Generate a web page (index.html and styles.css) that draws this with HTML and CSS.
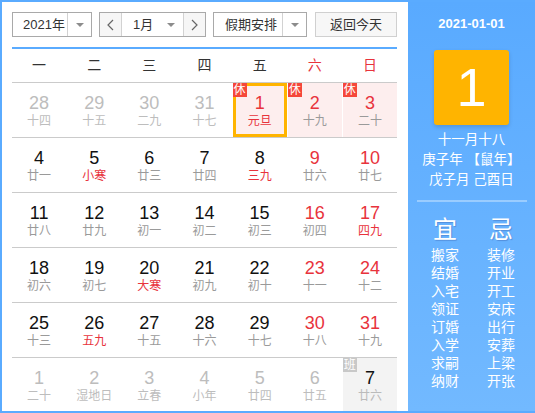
FILE: index.html
```html
<!DOCTYPE html>
<html lang="zh-CN">
<head>
<meta charset="utf-8">
<title>万年历</title>
<link rel="stylesheet" href="styles.css">
</head>
<body>
<div class="frame">
  <div class="main">
    <div class="toolbar">
      <div class="select year"><span class="sel-text">2021年</span><span class="sel-arrow"><i class="tri"></i></span></div>
      <div class="month-group">
        <span class="nav prev"><svg width="7" height="12" viewBox="0 0 7 12"><polyline points="6,1 1,6 6,11" fill="none" stroke="#666" stroke-width="1.2"/></svg></span>
        <span class="month-sel"><span class="sel-text">1月</span><i class="tri"></i></span>
        <span class="nav next"><svg width="7" height="12" viewBox="0 0 7 12"><polyline points="1,1 6,6 1,11" fill="none" stroke="#666" stroke-width="1.2"/></svg></span>
      </div>
      <div class="select holiday"><span class="sel-text">假期安排</span><span class="sel-arrow"><i class="tri"></i></span></div>
      <div class="today-btn">返回今天</div>
    </div>
    <div class="weekdays">
      <span>一</span><span>二</span><span>三</span><span>四</span><span>五</span><span class="red">六</span><span class="red">日</span>
    </div>
    <div class="weeks">
      <div class="week">
        <div class="day other"><span class="num">28</span><span class="lunar">十四</span></div>
        <div class="day other"><span class="num">29</span><span class="lunar">十五</span></div>
        <div class="day other"><span class="num">30</span><span class="lunar">二九</span></div>
        <div class="day other"><span class="num">31</span><span class="lunar">十七</span></div>
        <div class="day rest sel"><i class="badge">休</i><span class="num red">1</span><span class="lunar red">元旦</span></div>
        <div class="day rest"><i class="badge">休</i><span class="num red">2</span><span class="lunar">十九</span></div>
        <div class="day rest"><i class="badge">休</i><span class="num red">3</span><span class="lunar">二十</span></div>
      </div>
      <div class="week">
        <div class="day"><span class="num">4</span><span class="lunar">廿一</span></div>
        <div class="day"><span class="num">5</span><span class="lunar red">小寒</span></div>
        <div class="day"><span class="num">6</span><span class="lunar">廿三</span></div>
        <div class="day"><span class="num">7</span><span class="lunar">廿四</span></div>
        <div class="day"><span class="num">8</span><span class="lunar red">三九</span></div>
        <div class="day"><span class="num red">9</span><span class="lunar">廿六</span></div>
        <div class="day"><span class="num red">10</span><span class="lunar">廿七</span></div>
      </div>
      <div class="week">
        <div class="day"><span class="num">11</span><span class="lunar">廿八</span></div>
        <div class="day"><span class="num">12</span><span class="lunar">廿九</span></div>
        <div class="day"><span class="num">13</span><span class="lunar">初一</span></div>
        <div class="day"><span class="num">14</span><span class="lunar">初二</span></div>
        <div class="day"><span class="num">15</span><span class="lunar">初三</span></div>
        <div class="day"><span class="num red">16</span><span class="lunar">初四</span></div>
        <div class="day"><span class="num red">17</span><span class="lunar red">四九</span></div>
      </div>
      <div class="week">
        <div class="day"><span class="num">18</span><span class="lunar">初六</span></div>
        <div class="day"><span class="num">19</span><span class="lunar">初七</span></div>
        <div class="day"><span class="num">20</span><span class="lunar red">大寒</span></div>
        <div class="day"><span class="num">21</span><span class="lunar">初九</span></div>
        <div class="day"><span class="num">22</span><span class="lunar">初十</span></div>
        <div class="day"><span class="num red">23</span><span class="lunar">十一</span></div>
        <div class="day"><span class="num red">24</span><span class="lunar">十二</span></div>
      </div>
      <div class="week">
        <div class="day"><span class="num">25</span><span class="lunar">十三</span></div>
        <div class="day"><span class="num">26</span><span class="lunar red">五九</span></div>
        <div class="day"><span class="num">27</span><span class="lunar">十五</span></div>
        <div class="day"><span class="num">28</span><span class="lunar">十六</span></div>
        <div class="day"><span class="num">29</span><span class="lunar">十七</span></div>
        <div class="day"><span class="num red">30</span><span class="lunar">十八</span></div>
        <div class="day"><span class="num red">31</span><span class="lunar">十九</span></div>
      </div>
      <div class="week">
        <div class="day other"><span class="num">1</span><span class="lunar">二十</span></div>
        <div class="day other"><span class="num">2</span><span class="lunar">湿地日</span></div>
        <div class="day other"><span class="num">3</span><span class="lunar">立春</span></div>
        <div class="day other"><span class="num">4</span><span class="lunar">小年</span></div>
        <div class="day other"><span class="num">5</span><span class="lunar">廿四</span></div>
        <div class="day other"><span class="num">6</span><span class="lunar">廿五</span></div>
        <div class="day workday"><i class="badge work">班</i><span class="num">7</span><span class="lunar light">廿六</span></div>
      </div>
    </div>
  </div>
  <div class="side">
    <div class="side-date">2021-01-01</div>
    <div class="big-day">1</div>
    <div class="lunar-info">
      <div>十一月十八</div>
      <div>庚子年 【鼠年】</div>
      <div>戊子月 己酉日</div>
    </div>
    <div class="divider"></div>
    <div class="yiji">
      <div class="col">
        <div class="col-head">宜</div>
        <span>搬家</span><span>结婚</span><span>入宅</span><span>领证</span><span>订婚</span><span>入学</span><span>求嗣</span><span>纳财</span>
      </div>
      <div class="col">
        <div class="col-head">忌</div>
        <span>装修</span><span>开业</span><span>开工</span><span>安床</span><span>出行</span><span>安葬</span><span>上梁</span><span>开张</span>
      </div>
    </div>
  </div>
</div>
</body>
</html>
```

FILE: styles.css
```css
* { box-sizing: border-box; margin: 0; padding: 0; }
html, body { width: 535px; height: 413px; overflow: hidden; }
body {
  font-family: "Liberation Sans", "Noto Sans CJK SC", sans-serif;
  background: #fff;
  color: #111;
}
.frame {
  display: flex;
  width: 535px;
  height: 413px;
  border: 2px solid #5aabff;
  border-right: 0;
}
.main {
  width: 406px;
  padding: 10px 11px 0 10px;
  background: #fff;
  overflow: hidden;
}

/* toolbar */
.toolbar {
  display: flex;
  height: 25px;
  font-size: 13px;
  color: #333;
}
.select {
  display: flex;
  height: 25px;
  border: 1px solid #a9a9a9;
  background: #fff;
}
.sel-text { line-height: 23px; white-space: nowrap; }
.select .sel-text { flex: 1; }
.year { width: 80px; margin-right: 7px; }
.year .sel-text { padding-left: 10px; }
.holiday { width: 94px; margin-right: 8px; }
.holiday .sel-text { padding-left: 11px; }
.sel-arrow {
  width: 24px;
  border-left: 1px solid #d2d2d2;
  display: flex;
  align-items: center;
  justify-content: center;
}
.tri {
  display: block;
  width: 0;
  height: 0;
  border-left: 4px solid transparent;
  border-right: 4px solid transparent;
  border-top: 4px solid #8c8c8c;
}
.month-group {
  display: flex;
  width: 107px;
  height: 25px;
  margin-right: 7px;
  border: 1px solid #a9a9a9;
}
.nav {
  width: 22px;
  background: #f6f6f6;
  display: flex;
  align-items: center;
  justify-content: center;
}
.prev { border-right: 1px solid #d2d2d2; }
.next { border-left: 1px solid #d2d2d2; }
.month-sel {
  width: 61px;
  display: flex;
  align-items: center;
  padding-left: 11px;
  padding-right: 8px;
  background: #fff;
}
.month-sel .tri { margin-left: auto; }
.today-btn {
  width: 82px;
  height: 25px;
  border: 1px solid #d0d0d0;
  background: #f7f7f7;
  text-align: center;
  line-height: 23px;
}

/* weekdays header */
.weekdays {
  margin-top: 10px;
  border-top: 2px solid #5aabff;
  height: 35px;
  display: grid;
  grid-template-columns: repeat(7, 1fr);
  column-gap: 1px;
  font-size: 14px;
  line-height: 33px;
  text-align: center;
  color: #333;
}
.red { color: #e8333c; }

/* weeks */
.week {
  display: grid;
  grid-template-columns: repeat(7, 1fr);
  column-gap: 1px;
  height: 55px;
  border-top: 1px solid #cbcbcb;
}
.day {
  position: relative;
  display: flex;
  flex-direction: column;
  align-items: center;
  padding-top: 11px;
}
.num {
  font-size: 18px;
  line-height: 19px;
  color: #111;
}
.num.red { color: #e8333c; }
.lunar {
  font-size: 12px;
  line-height: 17px;
  color: #9a9a9a;
  white-space: nowrap;
}
.lunar.red { color: #e8333c; }
.lunar.light { color: #bbb; }
.day.other .num, .day.other .lunar { color: #bdbdbd; }
.day.rest { background: #fdeeee; }
.day.sel { box-shadow: inset 0 0 0 3px #ffb400; }
.day.workday { background: #f3f3f3; }
.badge {
  position: absolute;
  left: 0;
  top: 0;
  width: 14px;
  height: 14px;
  font-style: normal;
  font-size: 12px;
  line-height: 14px;
  text-align: center;
  color: #fff;
  background: #f5473a;
}
.badge.work { background: #c8c8c8; }

/* side panel */
.side {
  flex: 1;
  display: flex;
  flex-direction: column;
  align-items: center;
  padding-top: 14px;
  color: #fff;
  background: linear-gradient(#59aaff, #72b9ff);
}
.side-date {
  font-size: 13px;
  line-height: 16px;
  font-weight: bold;
}
.big-day {
  margin-top: 18px;
  width: 75px;
  height: 75px;
  border-radius: 3px;
  background: #ffb400;
  box-shadow: 0 2px 4px rgba(0, 0, 0, 0.15);
  font-size: 54px;
  line-height: 75px;
  text-align: center;
  color: #fff;
}
.lunar-info {
  margin-top: 5px;
  font-size: 13.5px;
  line-height: 20px;
  text-align: center;
  white-space: nowrap;
}
.divider {
  width: 110px;
  height: 2px;
  margin-top: 10px;
  background: rgba(255, 255, 255, 0.35);
}
.yiji {
  display: flex;
  gap: 6px;
  margin-top: 14px;
  padding-left: 3px;
}
.col {
  width: 50px;
  display: flex;
  flex-direction: column;
  align-items: center;
}
.col-head {
  font-size: 24px;
  line-height: 28px;
  margin-bottom: 2px;
  text-shadow: 1px 1px 1px rgba(0, 0, 80, 0.2);
}
.col span {
  font-size: 14px;
  line-height: 18px;
}
```
